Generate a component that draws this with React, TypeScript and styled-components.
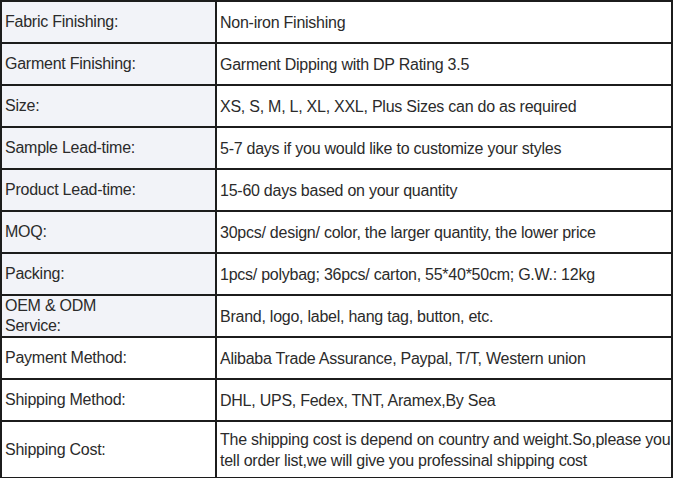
import styled, { createGlobalStyle } from 'styled-components'

const GlobalStyle = createGlobalStyle`
  html, body {
    margin: 0;
    padding: 0;
    background: #ffffff;
  }
`

const Page = styled.div`
  width: 673px;
  height: 478px;
  overflow: hidden;
  background: #ffffff;
`

const SpecTable = styled.table`
  width: 673px;
  border-collapse: collapse;
  table-layout: fixed;
  font-family: "Liberation Sans", Arial, sans-serif;
  font-size: 16px;
  color: #2b2b2b;
  letter-spacing: -0.25px;
`

const Row = styled.tr<{ $tall?: boolean }>`
  height: ${({ $tall }) => ($tall ? '57px' : '42px')};
`

const LabelCell = styled.td<{ $shaded?: boolean }>`
  width: 215px;
  padding: 0 3px;
  border: 2px solid #1c1c1c;
  background: ${({ $shaded }) => ($shaded ? '#f2f3f8' : '#ffffff')};
  line-height: 20px;
  vertical-align: middle;
`

const ValueCell = styled.td`
  padding: 0 0 0 3px;
  border: 2px solid #1c1c1c;
  background: #ffffff;
  line-height: 21px;
  vertical-align: middle;
`

const rows: [React.ReactNode, string][] = [
  ['Fabric Finishing:', 'Non-iron Finishing'],
  ['Garment Finishing:', 'Garment Dipping with DP Rating 3.5'],
  ['Size:', 'XS, S, M, L, XL, XXL, Plus Sizes can do as required'],
  ['Sample Lead-time:', '5-7 days if you would like to customize your styles'],
  ['Product Lead-time:', '15-60 days based on your quantity'],
  ['MOQ:', '30pcs/ design/ color, the larger quantity, the lower price'],
  ['Packing:', '1pcs/ polybag; 36pcs/ carton, 55*40*50cm; G.W.: 12kg'],
  [
    <>
      OEM &amp; ODM
      <br />
      Service:
    </>,
    'Brand, logo, label, hang tag, button, etc.',
  ],
  ['Payment Method:', 'Alibaba Trade Assurance, Paypal, T/T, Western union'],
  ['Shipping Method:', 'DHL, UPS, Fedex, TNT, Aramex,By Sea'],
  [
    'Shipping Cost:',
    'The shipping cost is depend on country and weight.So,please you tell order list,we will give you professinal shipping cost',
  ],
]

const App = () => {
  return (
    <Page>
      <GlobalStyle />
      <SpecTable>
        <colgroup>
          <col style={{ width: 215 }} />
          <col />
        </colgroup>
        <tbody>
          {rows.map(([label, value], i) => (
            <Row key={i} $tall={i === rows.length - 1}>
              <LabelCell $shaded={i < 8}>{label}</LabelCell>
              <ValueCell>{value}</ValueCell>
            </Row>
          ))}
        </tbody>
      </SpecTable>
    </Page>
  )
}

export default App
